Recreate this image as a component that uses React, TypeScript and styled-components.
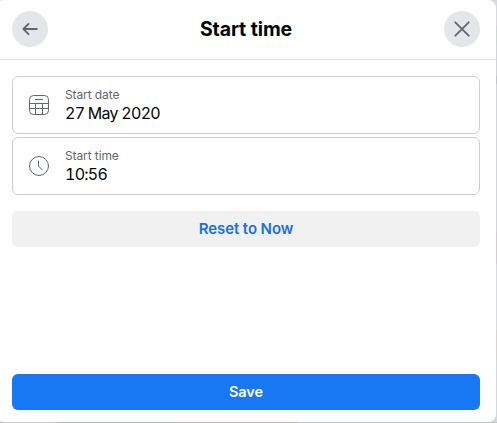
import React from 'react';
import styled, { createGlobalStyle } from 'styled-components';

const GlobalStyle = createGlobalStyle`
  *, *::before, *::after { box-sizing: border-box; }
  html, body { margin: 0; height: 100%; overflow: hidden; }
  body {
    font-family: Inter, "Liberation Sans", sans-serif;
    color: #050505;
  }
`;

const Backdrop = styled.div`
  width: 497px;
  height: 423px;
  overflow: hidden;
  background:
    linear-gradient(90deg, #c9cac9 0 57px, #b3b9ba 57px 177px, #bab8b4 177px 298px, #c2c3c4 298px) 0 422px / 100% 1px no-repeat,
    linear-gradient(180deg, #d7d9dc 0 26px, #bfdccf 26px 44px, #d2d3d5 44px 76px, #c3c4c6 76px 84px, #d3d4d6 84px 232px, #d8c9ce 232px 264px, #d9dadb 264px 330px, #dad3c9 330px 360px, #d6d7d8 360px) 496px 0 / 1px 100% no-repeat,
    #d6d8db;
`;

const Dialog = styled.section`
  display: flex;
  flex-direction: column;
  width: 500px;
  height: 422px;
  margin-left: -4px;
  border-radius: 8px;
  background: #fff;
`;

const Header = styled.header`
  display: grid;
  grid-template-columns: 36px 1fr 36px;
  align-items: center;
  height: 60px;
  padding: 0 16px 2px;
  border-bottom: 1px solid #e0e1e3;
`;

const Title = styled.h1`
  margin: 0;
  text-align: center;
  font-size: 19.5px;
  line-height: 24px;
  font-weight: 700;
  letter-spacing: -0.1px;
`;

const RoundButton = styled.button`
  display: grid;
  place-items: center;
  width: 36px;
  height: 36px;
  padding: 0;
  border: 0;
  border-radius: 50%;
  background: #e4e6eb;
  color: #606770;
`;

const Body = styled.main`
  display: flex;
  flex: 1;
  flex-direction: column;
  padding: 16px 16px 12px;
`;

const Fields = styled.div`
  display: grid;
  gap: 3px;
  margin-bottom: 16px;
`;

const Field = styled.div`
  display: flex;
  align-items: center;
  gap: 16px;
  height: 58px;
  padding: 0 16px;
  border: 1px solid #ccd0d5;
  border-radius: 6px;
  color: #606770;
`;

const FieldText = styled.div`
  display: flex;
  flex-direction: column;
  padding-top: 1px;
`;

const Label = styled.span`
  font-size: 12px;
  line-height: 16px;
  letter-spacing: -0.1px;
  color: #65676b;
`;

const Value = styled.span`
  font-size: 16px;
  line-height: 21px;
  letter-spacing: -0.74px;
  font-variant-numeric: tabular-nums;
  color: #050505;
`;

const ActionButton = styled.button<{ $primary?: boolean }>`
  height: 36px;
  margin-top: ${({ $primary }) => ($primary ? 'auto' : '0')};
  padding: 0;
  border: 0;
  border-radius: 6px;
  background: ${({ $primary }) => ($primary ? '#1877f2' : '#f1f1f1')};
  color: ${({ $primary }) => ($primary ? '#fff' : '#1b6fe6')};
  font-family: inherit;
  font-size: ${({ $primary }) => ($primary ? '14.5px' : '15px')};
  font-weight: 600;
  line-height: 20px;
  letter-spacing: -0.1px;
`;

const Icon = styled.svg`
  display: block;
  flex: none;
  fill: none;
  stroke: currentColor;
`;

const BackIcon = () => (
  <Icon width="20" height="20" viewBox="0 0 20 20" strokeWidth="1.9" strokeLinecap="round" strokeLinejoin="round">
    <path d="M16.8 10H3.4M8.5 4.9L3.4 10l5.1 5.1" />
  </Icon>
);

const CloseIcon = () => (
  <Icon width="20" height="20" viewBox="0 0 20 20" strokeWidth="1.8" strokeLinecap="round">
    <path d="M3.3 3.3l13.4 13.4M16.7 3.3L3.3 16.7" />
  </Icon>
);

const CalendarIcon = () => (
  <Icon width="20" height="20" viewBox="0 0 20 20" strokeWidth="1">
    <rect x="0.5" y="0.5" width="19" height="19" rx="4" />
    <path d="M6 4.5h8M0.5 8.5h19M0.5 13.5h19M6.5 8.5v11M13.5 8.5v11" />
  </Icon>
);

const ClockIcon = () => (
  <Icon width="20" height="20" viewBox="0 0 20 20" strokeWidth="1" strokeLinecap="round" strokeLinejoin="round">
    <circle cx="10" cy="10" r="9.5" />
    <path d="M9.5 5v5l3.5 3.7" />
  </Icon>
);

type DateFieldProps = { icon: React.ReactNode; label: string; value: string };

const DateField = ({ icon, label, value }: DateFieldProps) => (
  <Field>
    {icon}
    <FieldText>
      <Label>{label}</Label>
      <Value>{value}</Value>
    </FieldText>
  </Field>
);

export default function App() {
  return (
    <>
      <GlobalStyle />
      <Backdrop>
        <Dialog aria-label="Start time">
          <Header>
            <RoundButton aria-label="Back"><BackIcon /></RoundButton>
            <Title>Start time</Title>
            <RoundButton aria-label="Close"><CloseIcon /></RoundButton>
          </Header>
          <Body>
            <Fields>
              <DateField icon={<CalendarIcon />} label="Start date" value="27 May 2020" />
              <DateField icon={<ClockIcon />} label="Start time" value="10:56" />
            </Fields>
            <ActionButton>Reset to Now</ActionButton>
            <ActionButton $primary>Save</ActionButton>
          </Body>
        </Dialog>
      </Backdrop>
    </>
  );
}
